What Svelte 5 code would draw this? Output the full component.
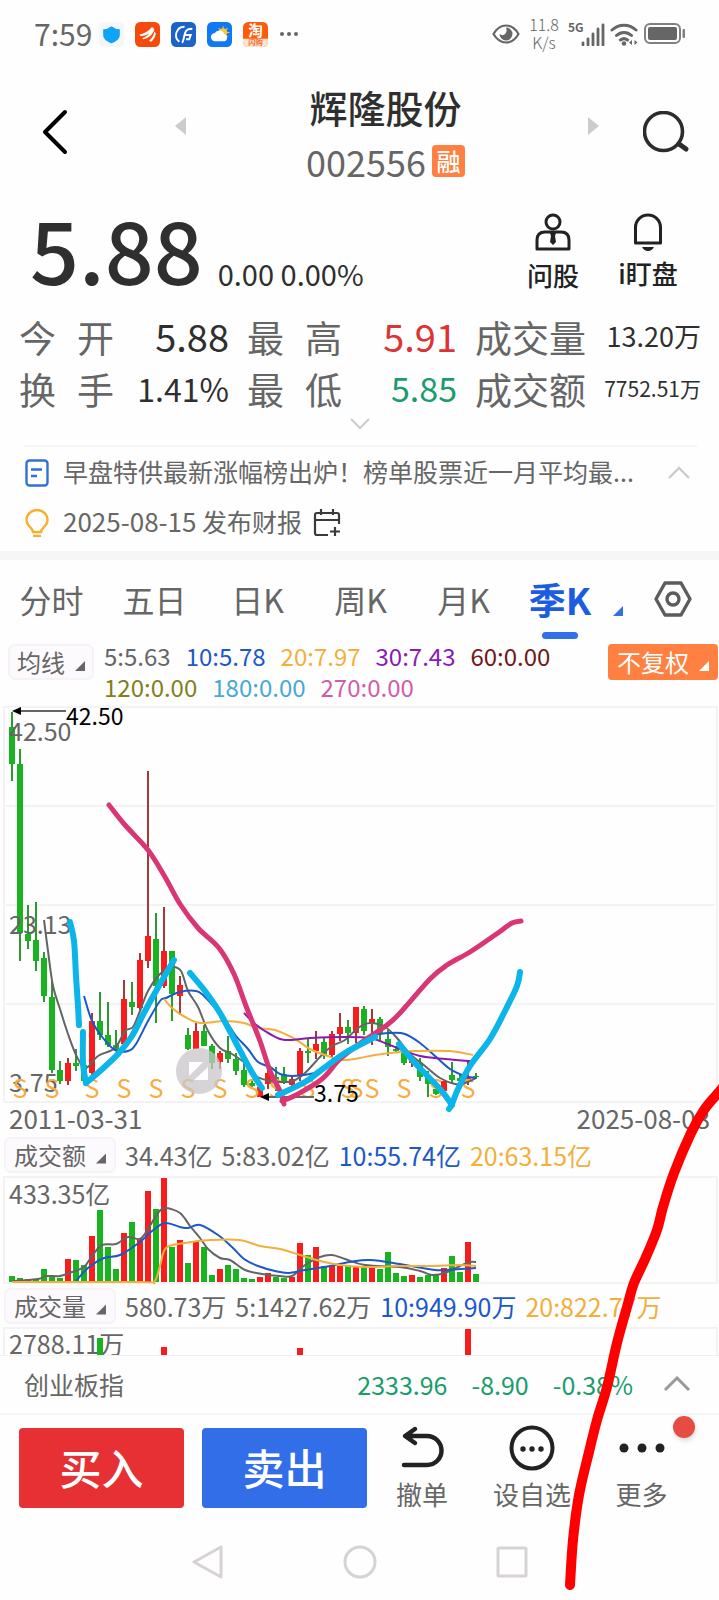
<script>
  const tabs = ['分时', '五日', '日K', '周K', '月K', '季K'];

  const averages = [
    [
      { text: '5:5.63', tone: 'gray' },
      { text: '10:5.78', tone: 'blue' },
      { text: '20:7.97', tone: 'gold' },
      { text: '30:7.43', tone: 'purple' },
      { text: '60:0.00', tone: 'maroon' }
    ],
    [
      { text: '120:0.00', tone: 'olive' },
      { text: '180:0.00', tone: 'sky' },
      { text: '270:0.00', tone: 'pink' }
    ]
  ];

  const amounts = [
    { text: '34.43亿', tone: 'gray' },
    { text: '5:83.02亿', tone: 'gray' },
    { text: '10:55.74亿', tone: 'blue' },
    { text: '20:63.15亿', tone: 'gold' }
  ];

  const volumes = [
    { text: '580.73万', tone: 'gray' },
    { text: '5:1427.62万', tone: 'gray' },
    { text: '10:949.90万', tone: 'blue' },
    { text: '20:822.77万', tone: 'gold' }
  ];

  // Quarterly candles: direction, wick top, wick bottom, body top, body bottom
  const candles = [
    ['g', 711, 780, 726, 763], ['g', 748, 960, 763, 932], ['g', 904, 948, 933, 940],
    ['g', 901, 970, 939, 960], ['g', 951, 1001, 957, 995], ['g', 980, 1072, 996, 1069],
    ['g', 1060, 1083, 1069, 1080], ['r', 1057, 1084, 1062, 1080], ['g', 1048, 1070, 1062, 1065],
    ['g', 1040, 1082, 1064, 1080], ['r', 1012, 1075, 1020, 1072], ['g', 991, 1039, 1020, 1034],
    ['g', 1001, 1046, 1034, 1044], ['g', 1029, 1050, 1044, 1049], ['r', 979, 1045, 998, 1043],
    ['g', 981, 1014, 1001, 1006], ['r', 952, 1010, 959, 1007], ['r', 770, 967, 935, 960],
    ['g', 912, 1022, 938, 985], ['r', 906, 987, 950, 985], ['g', 950, 1020, 950, 993],
    ['r', 975, 1014, 984, 995], ['g', 1027, 1049, 1034, 1048], ['r', 1021, 1048, 1030, 1048],
    ['g', 1024, 1045, 1030, 1045], ['g', 1043, 1068, 1045, 1062], ['r', 1050, 1068, 1052, 1061],
    ['g', 1035, 1062, 1050, 1058], ['g', 1052, 1074, 1058, 1070], ['g', 1060, 1086, 1069, 1084],
    ['g', 1079, 1086, 1082, 1085], ['r', 1084, 1096, 1086, 1096], ['r', 1067, 1088, 1072, 1083],
    ['g', 1066, 1090, 1076, 1080], ['g', 1066, 1083, 1073, 1080], ['r', 1074, 1086, 1078, 1084],
    ['r', 1047, 1080, 1050, 1074], ['g', 1038, 1062, 1050, 1052], ['r', 1030, 1058, 1043, 1050],
    ['g', 1036, 1058, 1041, 1054], ['r', 1030, 1056, 1033, 1054], ['r', 1012, 1040, 1026, 1033],
    ['g', 1019, 1043, 1026, 1032], ['r', 1006, 1042, 1006, 1032], ['g', 1005, 1034, 1008, 1030],
    ['r', 1008, 1044, 1018, 1022], ['g', 1016, 1040, 1018, 1033], ['g', 1029, 1055, 1038, 1046],
    ['g', 1045, 1052, 1048, 1050], ['g', 1046, 1064, 1049, 1062], ['r', 1054, 1066, 1058, 1062],
    ['g', 1057, 1080, 1062, 1076], ['g', 1070, 1096, 1076, 1083], ['g', 1080, 1094, 1088, 1093],
    ['r', 1080, 1090, 1080, 1090], ['g', 1061, 1083, 1074, 1079], ['g', 1074, 1082, 1077, 1080],
    ['r', 1060, 1084, 1076, 1081], ['g', 1072, 1078, 1075, 1076]
  ];

  // Bar tops of the turnover chart, one per candle
  const turnover = [
    1275, 1277, 1278, 1278, 1268, 1276, 1277, 1258, 1259, 1264, 1235, 1209, 1246, 1268, 1232,
    1221, 1238, 1190, 1208, 1177, 1246, 1239, 1262, 1240, 1246, 1274, 1268, 1264, 1268, 1277,
    1278, 1276, 1272, 1276, 1277, 1276, 1242, 1254, 1246, 1265, 1265, 1265, 1264, 1265, 1266,
    1266, 1268, 1251, 1272, 1275, 1274, 1276, 1274, 1274, 1267, 1255, 1271, 1241, 1273
  ];

  const dividends = [20, 52, 92, 124, 156, 188, 220, 252, 276, 308, 348, 356, 372, 404, 436, 468];

  const priceLines = [
    ['#646464', '44,919 48,950 53,985 60,1008 68,1033 77,1056 86,1067 98,1055 115,1047 125,1030 133,1026 140,1010 148,990 160,973 172,966 181,970 188,990 198,1006 208,1030 220,1047 232,1053 246,1063 254,1074 266,1079 280,1081 293,1080 305,1072 320,1056 332,1045 345,1039 358,1027 370,1022 385,1026 397,1037 410,1053 425,1065 440,1077 455,1083 465,1082 476,1077'],
    ['#1c58c8', '84,995 92,1020 103,1037 115,1049 128,1050 136,1043 148,1020 160,1000 166,997 180,991 196,990 204,995 215,1007 226,1020 236,1035 248,1048 258,1061 270,1066 280,1073 292,1075 310,1073 325,1068 340,1056 360,1042 375,1034 390,1032 405,1033 420,1042 435,1055 450,1068 465,1075 476,1077'],
    ['#f3ae3c', '164,998 172,1007 185,1016 200,1022 225,1020 244,1022 258,1027 275,1029 295,1038 310,1048 325,1054 342,1059 360,1057 375,1054 400,1051 415,1050 450,1050 473,1054'],
    ['#8a1ab0', '244,1012 255,1023 270,1033 285,1039 310,1037 345,1036 370,1037 385,1042 400,1048 420,1055 445,1058 470,1060']
  ];

  const turnoverLines = [
    ['#646464', '12,1280 38,1278 46,1275 60,1275 72,1271 84,1266 92,1255 102,1244 116,1243 128,1236 140,1238 148,1228 158,1212 165,1207 180,1212 190,1225 200,1237 208,1248 220,1257 230,1259 245,1269 262,1273 280,1275 292,1275 305,1264 320,1256 332,1254 345,1258 365,1264 400,1266 420,1270 432,1274 445,1272 460,1265 470,1261 476,1261'],
    ['#1c58c8', '76,1280 88,1267 104,1257 120,1254 140,1241 152,1230 165,1222 180,1226 188,1227 200,1224 218,1234 232,1246 244,1258 258,1265 275,1270 288,1272 305,1269 330,1265 350,1261 370,1259 400,1263 435,1269 460,1268 476,1267'],
    ['#f3ae3c', '12,1281 140,1281 154,1281 160,1265 166,1247 185,1242 210,1239 240,1239 260,1245 280,1248 300,1254 320,1260 340,1264 365,1266 400,1265 430,1265 460,1264 476,1265']
  ];

  const cyanStrokes = [
    '70,921 74,940 76,975 78,1005 79,1024',
    '83,1031 83,1062 86,1082',
    '86,1082 100,1070 118,1053 132,1035 145,1010 160,983 174,959',
    '190,972 205,990 220,1012 235,1040 250,1068 262,1087',
    '278,1094 305,1081 320,1070 345,1052 375,1036',
    '399,1043 415,1062 440,1088 452,1104',
    '449,1108 452,1103 458,1088 470,1065 490,1038 505,1010 517,985 520,971'
  ];

  const pinkStrokes = [
    '109,804 125,824 148,849 165,876 180,903 198,927 219,947 234,973 246,1005 260,1040 270,1070 280,1090 284,1103',
    '282,1100 296,1094 322,1078 340,1058 362,1041 387,1024 400,1012 430,978 447,964 470,951 495,934 512,922 521,920'
  ];

  const penStroke = '726,1084 719,1092 704,1110 691,1133 674,1173 663,1207 657,1230 646,1257 634,1283 627,1307 617,1343 607,1387 597,1420 589,1452 579,1495 573,1540 570,1585';

  const colors = { g: '#17b41f', r: '#f81c1c' };
  const wicks = { g: '#2c9a30', r: '#a33a38' };

  // Catmull-Rom spline through the points
  function smooth(points) {
    const p = points.split(' ').map((s) => s.split(',').map(Number));
    let d = `M${p[0][0]} ${p[0][1]}`;
    for (let i = 0; i < p.length - 1; i++) {
      const a = p[i - 1] ?? p[i];
      const b = p[i];
      const c = p[i + 1];
      const e = p[i + 2] ?? c;
      d += `C${b[0] + (c[0] - a[0]) / 6} ${b[1] + (c[1] - a[1]) / 6} ${c[0] - (e[0] - b[0]) / 6} ${c[1] - (e[1] - b[1]) / 6} ${c[0]} ${c[1]}`;
    }
    return d;
  }
</script>

<div class="page">
  <header class="status">
    <span class="clock">7:59</span>
    <svg class="app" viewBox="0 0 24 24"><rect width="24" height="24" rx="4" fill="#f5f6f7" /><path d="M12 4q-4 3-8 3v5.500c0 4 4 6.500 8 8 4-1.500 8-4 8-8V7q-4 0-8-3z" fill="#10a4f8" /></svg>
    <svg class="app" viewBox="0 0 24 24"><rect width="24" height="24" rx="5" fill="#f64a0c" /><path d="M4.500 12C9 11 13 9 16 5l2 .5c-1.500 4.500-7 8-13 8zM7 15.500c5-1.500 8-5 10-9.500l1.500 1c-1 5-5.500 8.500-10.500 9.500zM13.500 18c3-2.500 4.500-5.500 5-9l1.500 2c-.5 3-2 6-4.500 8z" fill="#fff" /></svg>
    <svg class="app" viewBox="0 0 24 24"><rect width="24" height="24" rx="5" fill="#1c63c8" /><path d="M13 4.500c-8 0-11 10-5 14.500M10.500 20c2-1.500 2-9 4-11.500q1.500-2 6-2M13 12.500h6l-1.500 4h-3" fill="none" stroke="#fff" stroke-width="1.800" /></svg>
    <svg class="app" viewBox="0 0 24 24"><rect width="24" height="24" rx="5" fill="#0f78f4" /><path d="M15.500 4v12M9.500 10h12M11.300 5.800l8.400 8.400M19.700 5.800l-8.400 8.400" stroke="#ffc928" stroke-width="1" /><circle cx="15.500" cy="10" r="4" fill="#ffc928" /><path d="M8 18.500a4 4 0 0 1-.5-8 5 5 0 0 1 9 1 3.600 3.600 0 0 1 0 7z" fill="#fff" /></svg>
    <svg class="app" viewBox="0 0 24 24"><rect width="24" height="24" rx="5" fill="#ff5a0c" /><path d="M0 16h24v3a5 5 0 0 1-5 5H5a5 5 0 0 1-5-5z" fill="#ffe2cc" /><text x="12" y="13.500" text-anchor="middle" font-size="14" font-weight="700" fill="#fff">淘</text><text x="12" y="22.500" text-anchor="middle" font-size="7" font-weight="700" fill="#f07030">闪购</text></svg>
    <svg class="more" viewBox="0 0 20 6"><circle cx="3" cy="3" r="2" /><circle cx="10" cy="3" r="2" /><circle cx="17" cy="3" r="2" /></svg>
    <span class="fill"></span>
    <svg class="eye" viewBox="0 0 28 20"><path d="M1.500 10C5 4 9 1.500 14 1.500S23 4 26.500 10C23 16 19 18.500 14 18.500S5 16 1.500 10z" fill="none" stroke="#666" stroke-width="2.200" /><path d="M14 3.500a6.500 6.500 0 1 1-6.500 6.500q3.500 2.500 6-.5 2-3 .5-6z" fill="#666" /></svg>
    <span class="speed">11.8<br />K/s</span>
    <span class="net">5G</span>
    <svg class="signal" viewBox="0 0 24 23"><path d="M2 20v2M7 16v6M12 11v11M17 6v16M22 2v20" stroke="#666" stroke-width="2.800" stroke-linecap="round" /></svg>
    <svg class="wifi" viewBox="0 0 28 23"><g fill="none" stroke="#666" stroke-width="3" stroke-linecap="round"><path d="M2 7C9 .5 19 .5 26 7M6.500 12.500c4.500-4 10.500-4 15 0M10.500 17c2.500-2 4.500-2 7 0" /></g><circle cx="14" cy="20.500" r="2.300" fill="#666" /><path d="M22 17v5l-3-2.500zM24.500 17v5l3-2.500z" fill="#666" /></svg>
    <svg class="battery" viewBox="0 0 42 22"><rect x="1" y="1" width="35" height="19" rx="5" fill="none" stroke="#808080" stroke-width="2" /><rect x="4" y="4" width="29" height="13" rx="2" fill="#666" /><path d="M39 6.500h1.500v8H39z" fill="#808080" stroke="#808080" stroke-linejoin="round" /></svg>
  </header>

  <nav class="title-bar">
    <button class="plain" aria-label="返回"><svg class="back" viewBox="0 0 26 46"><path d="M23 3 3 23l20 20" fill="none" stroke="#000" stroke-width="4" stroke-linecap="round" stroke-linejoin="round" /></svg></button>
    <button class="plain previous" aria-label="上一只"><svg class="step" viewBox="0 0 11 18"><path d="M11 0v18L0 9z" fill="#ccc" /></svg></button>
    <div class="title">
      <h1>辉隆股份</h1>
      <p>002556<span class="badge">融</span></p>
    </div>
    <button class="plain next" aria-label="下一只"><svg class="step" viewBox="0 0 11 18"><path d="M0 0v18l11-9z" fill="#ccc" /></svg></button>
    <button class="plain" aria-label="搜索"><svg class="search" viewBox="0 0 46 42"><circle cx="20.500" cy="20.500" r="19" fill="none" stroke="#2c2c2c" stroke-width="3.600" /><path d="m36 33 7 5" stroke="#2c2c2c" stroke-width="5" stroke-linecap="round" /></svg></button>
  </nav>

  <section class="quote">
    <strong>5.88</strong>
    <span class="change">0.00 0.00%</span>
    <span class="fill"></span>
    <button class="plain tool">
      <svg viewBox="0 0 36 38"><g fill="none" stroke="#222" stroke-width="3"><circle cx="18" cy="9" r="7" /><path d="M10 19h16q8 0 8 8v9H2v-9q0-8 8-8z" stroke-linejoin="round" /></g><path d="m18 18 3 2-1 3 1 6-3 3-3-3 1-6-1-3z" fill="#222" /></svg>
      问股
    </button>
    <button class="plain tool">
      <svg viewBox="0 0 36 38"><path d="M5.500 30V14.500a12.500 12.500 0 0 1 25 0V30z" fill="none" stroke="#222" stroke-width="3" stroke-linejoin="round" /><path d="M12 34h12q-2 4-6 4t-6-4z" fill="#222" /></svg>
      i盯盘
    </button>
  </section>

  <dl class="stats">
    <div><dt><span>今</span><span>开</span></dt><dd class="big">5.88</dd></div>
    <div><dt><span>最</span><span>高</span></dt><dd class="big up">5.91</dd></div>
    <div><dt class="wide">成交量</dt><dd class="mid">13.20万</dd></div>
    <div><dt><span>换</span><span>手</span></dt><dd class="rate">1.41%</dd></div>
    <div><dt><span>最</span><span>低</span></dt><dd class="low down">5.85</dd></div>
    <div><dt class="wide">成交额</dt><dd class="small">7752.51万</dd></div>
  </dl>
  <button class="plain expand" aria-label="展开"><svg viewBox="0 0 22 12"><path d="m2 1 9 9 9-9" fill="none" stroke="#ccc" stroke-width="2" /></svg></button>

  <section class="news">
    <a href="#news">
      <svg viewBox="0 0 24 28"><rect x="1.500" y="1.500" width="21" height="25" rx="3" fill="none" stroke="#3270d8" stroke-width="2.400" /><path d="M6 10.500h11M6 17h6" stroke="#3270d8" stroke-width="2.400" /></svg>
      <span class="headline">早盘特供最新涨幅榜出炉！榜单股票近一月平均最...</span>
      <svg class="fold" viewBox="0 0 24 14"><path d="m2 12 10-10 10 10" fill="none" stroke="#ccc" stroke-width="2.400" /></svg>
    </a>
    <a href="#report">
      <svg viewBox="0 0 24 28"><path d="M8 23c0-4-6.500-6-6.500-12a10.500 10 0 0 1 21 0c0 6-6.500 8-6.500 12zM8 27h8" fill="none" stroke="#f5b02c" stroke-width="2.400" /></svg>
      <span><span class="date">2025-08-15</span> 发布财报</span>
      <svg class="calendar" viewBox="0 0 28 28"><path d="M15 26H4q-2 0-2-2V6q0-2 2-2h20q2 0 2 2v9M2 11h24M8 0v6M20 0v6M22 18v9M17 22.500h10" fill="none" stroke="#3a3a3a" stroke-width="2.200" /></svg>
    </a>
  </section>

  <nav class="tabs">
    {#each tabs as tab, i}
      <button class="plain" class:active={i === 5}>{tab}</button>
    {/each}
    <svg class="caret-blue" viewBox="0 0 10 10"><path d="M10 0v10H0z" fill="#3270e8" /></svg>
    <button class="plain" aria-label="设置"><svg class="gear" viewBox="0 0 38 36"><path d="M11 2h16l9 16-9 16H11L2 18z" fill="none" stroke="#5c5c5c" stroke-width="3.400" stroke-linejoin="round" /><circle cx="19" cy="18" r="6" fill="none" stroke="#5c5c5c" stroke-width="3.400" /></svg></button>
  </nav>

  <section class="legend">
    <button class="chip">均线<i></i></button>
    <div class="averages">
      {#each averages as row}
        <div>{#each row as item}<span class={item.tone}>{item.text}</span>{/each}</div>
      {/each}
    </div>
    <button class="chip orange">不复权<i></i></button>
  </section>

  <svg class="chart" viewBox="0 705 719 405" role="img" aria-label="季K线图">
    <g fill="none" stroke="#f4f3f4" stroke-width="2">
      <rect x="4" y="706" width="713" height="395" />
      <path d="M6 805h709M6 904h709M6 1003h709" />
    </g>
    {#each candles as [dir, top, low, open, close], i}
      <rect x={11 + 8 * i} y={top} width="2" height={low - top} fill={wicks[dir]} />
      <rect x={9 + 8 * i} y={open} width="6" height={close - open} fill={colors[dir]} />
    {/each}
    <g font-size="25" fill="#666">
      <text x="9" y="740">42.50</text>
      <text x="9" y="933">23.13</text>
      <text x="9" y="1091">3.75</text>
    </g>
    <g font-size="25" fill="#f3ae3c" text-anchor="middle">
      {#each dividends as x}<text {x} y="1097">S</text>{/each}
    </g>
    {#each priceLines as [color, points]}
      <path d={smooth(points)} fill="none" stroke={color} stroke-width="2" />
    {/each}
    <path d="M18 710h48M264 1096h50" stroke="#666" stroke-width="2" />
    <path d="m12 710 9-4v8zM260 1096l9-4v8z" />
    <g font-size="23">
      <text x="66" y="724">42.50</text>
      <text x="314" y="1101">3.75</text>
    </g>
    <circle cx="199" cy="1070" r="23" fill="#c9c5ca" opacity="0.75" />
    <path d="M189 1061h14l-14 14zM208 1066v13h-14z" fill="#fff" />
    <g fill="none" stroke-linecap="round" stroke-linejoin="round">
      {#each pinkStrokes as points}<path d={smooth(points)} stroke="#d83675" stroke-width="5" />{/each}
      {#each cyanStrokes as points}<path d={smooth(points)} stroke="#0bb5ea" stroke-width="6" />{/each}
    </g>
  </svg>
  <div class="range"><span>2011-03-31</span><span>2025-08-08</span></div>

  <section class="legend values">
    <button class="chip">成交额<i></i></button>
    {#each amounts as item}<span class={item.tone}>{item.text}</span>{/each}
  </section>
  <svg class="chart" viewBox="0 1175 719 108" role="img" aria-label="成交额">
    <rect x="4" y="1176" width="713" height="106" fill="none" stroke="#f4f3f4" stroke-width="2" />
    {#each turnover as top, i}
      <rect x={9 + 8 * i} y={top} width="6" height={1281 - top} fill={colors[candles[i][0]]} />
    {/each}
    <text x="9" y="1203" font-size="25" fill="#666">433.35亿</text>
    {#each turnoverLines as [color, points]}
      <path d={smooth(points)} fill="none" stroke={color} stroke-width="2" />
    {/each}
  </svg>

  <section class="legend values">
    <button class="chip">成交量<i></i></button>
    {#each volumes as item}<span class={item.tone}>{item.text}</span>{/each}
  </section>
  <svg class="chart clipped" viewBox="0 1326 719 28" role="img" aria-label="成交量">
    <path d="M4 1354v-27h713v27" fill="none" stroke="#f4f3f4" stroke-width="2" />
    <text x="9" y="1353" font-size="25" fill="#666">2788.11万</text>
    <rect x="97" y="1337" width="6" height="17" fill="#17b41f" />
    <path d="M161 1346h6v8h-6zM297 1347h6v7h-6zM465 1328h6v26h-6z" fill="#f81c1c" />
  </svg>

  <section class="index">
    <span>创业板指</span>
    <span class="fill"></span>
    <b>2333.96</b><b>-8.90</b><b>-0.38%</b>
    <svg viewBox="0 0 28 16"><path d="m2 14 12-12 12 12" fill="none" stroke="#999" stroke-width="3" /></svg>
  </section>

  <footer class="actions">
    <button class="trade buy">买入</button>
    <button class="trade sell">卖出</button>
    <button class="plain action">
      <svg viewBox="0 0 48 48"><path d="M6 41h23a14 14 0 0 0 0-29H8M17 5 7 12l10 7" fill="none" stroke="#222" stroke-width="4.500" stroke-linecap="round" stroke-linejoin="round" /></svg>
      撤单
    </button>
    <button class="plain action wider">
      <svg viewBox="0 0 48 48"><circle cx="24" cy="24" r="20.500" fill="none" stroke="#222" stroke-width="4" /><g fill="#222"><circle cx="15" cy="25" r="2.700" /><circle cx="24" cy="25" r="2.700" /><circle cx="33" cy="25" r="2.700" /></g></svg>
      设自选
    </button>
    <button class="plain action last">
      <svg viewBox="0 0 48 48"><g fill="#222"><circle cx="6" cy="24" r="4.500" /><circle cx="24" cy="24" r="4.500" /><circle cx="42" cy="24" r="4.500" /></g></svg>
      更多
      <span class="dot"></span>
    </button>
  </footer>

  <nav class="system">
    <button class="plain" aria-label="后退"><svg viewBox="0 0 34 34"><path d="M30 2v30L3 17z" /></svg></button>
    <button class="plain" aria-label="主页"><svg viewBox="0 0 34 34"><circle cx="17" cy="17" r="15" /></svg></button>
    <button class="plain" aria-label="最近任务"><svg viewBox="0 0 34 34"><rect x="3" y="3" width="28" height="28" rx="1" /></svg></button>
  </nav>

  <svg class="pen" viewBox="0 0 719 1600" preserveAspectRatio="xMinYMin meet" aria-hidden="true">
    <path d={smooth(penStroke)} fill="none" stroke="#fe0000" stroke-width="10" stroke-linecap="round" />
  </svg>
</div>

<style>
  :global(body) {
    background: #fefefe;
  }
  .page {
    position: relative;
    overflow: hidden;
    font-family: 'Noto Sans CJK SC', 'Noto Sans', sans-serif;
    color: #666;
    background: #fefefe;
  }
  svg {
    display: block;
    flex: none;
  }
  h1, p, dl, dt, dd {
    margin: 0;
    font-weight: 400;
  }
  button {
    font: inherit;
    color: inherit;
    border: 0;
    padding: 0;
    white-space: nowrap;
  }
  .plain {
    background: none;
  }
  .fill {
    flex: 1;
  }

  .status {
    display: flex;
    align-items: center;
    height: 68px;
    padding: 0 33px 0 34px;
  }
  .clock {
    width: 65px;
    font-size: 30px;
    line-height: 36px;
    padding-bottom: 2px;
  }
  .app {
    width: 25px;
    height: 25px;
    margin-right: 11px;
    overflow: visible;
  }
  .more {
    width: 20px;
    fill: #666;
  }
  .eye {
    width: 28px;
  }
  .speed {
    width: 48px;
    text-align: center;
    font-size: 16px;
    line-height: 18px;
    font-weight: 300;
    padding-bottom: 2px;
  }
  .net {
    align-self: flex-start;
    margin-top: 19px;
    font-size: 12px;
    line-height: 16px;
    font-weight: 700;
    width: 13px;
  }
  .signal {
    width: 24px;
    margin-right: 5px;
  }
  .wifi {
    width: 28px;
    margin-right: 6px;
  }
  .battery {
    width: 42px;
  }

  .title-bar {
    display: flex;
    align-items: flex-start;
    padding: 12px 30px 0 42px;
    height: 124px;
    box-sizing: border-box;
  }
  .back {
    width: 26px;
    margin-top: 29px;
  }
  .previous {
    margin-left: 107px;
  }
  .next {
    margin-right: 44px;
  }
  .step {
    width: 11px;
    margin-top: 37px;
  }
  .search {
    width: 46px;
    margin-top: 31px;
  }
  .title {
    flex: 1;
    text-align: center;
    padding-right: 3px;
  }
  h1 {
    font-size: 38px;
    line-height: 54px;
    font-weight: 500;
    color: #2f2f2f;
  }
  .title p {
    display: flex;
    align-items: center;
    justify-content: center;
    gap: 6px;
    font-size: 36px;
    line-height: 54px;
  }
  .badge {
    width: 33px;
    border-radius: 4px;
    background: #ff8040;
    color: #fff;
    font-size: 24px;
    line-height: 32px;
    font-weight: 500;
  }

  .quote {
    display: flex;
    align-items: flex-end;
    height: 119px;
    padding: 0 39px 0 29px;
    color: #2f2f2f;
  }
  .quote strong {
    font-size: 86px;
    line-height: 116px;
    font-weight: 500;
    margin: 0 15px 5px 1px;
  }
  .change {
    font-size: 29px;
    line-height: 40px;
    margin-bottom: 18px;
  }
  .tool {
    display: flex;
    flex-direction: column;
    align-items: center;
    gap: 6px;
    width: 98px;
    padding-bottom: 18px;
    font-size: 26px;
    line-height: 36px;
    font-weight: 500;
    color: #222;
  }
  .tool + .tool {
    gap: 4px;
    padding-bottom: 20px;
    width: 92px;
    margin-right: -14px;
  }
  .tool svg {
    width: 36px;
  }

  .stats {
    display: grid;
    grid-template-columns: 210fr 210fr 226fr;
    grid-auto-rows: 52px;
    column-gap: 18px;
    padding: 0 18px 0 19px;
  }
  .stats div {
    display: flex;
    align-items: center;
    justify-content: space-between;
  }
  dt {
    display: flex;
    justify-content: space-between;
    width: 95px;
    font-size: 37px;
    line-height: 52px;
  }
  dt.wide {
    width: auto;
  }
  dd {
    color: #2f2f2f;
    line-height: 50px;
    padding-bottom: 2px;
    white-space: nowrap;
  }
  .big { font-size: 38px; }
  .mid { font-size: 27px; }
  .rate { font-size: 32px; }
  .low { font-size: 34px; }
  .small { font-size: 21px; }
  .up { color: #dc3337; }
  .down { color: #1b9c6c; }
  .expand {
    display: block;
    margin: 3px auto 15px;
  }
  .expand svg {
    width: 22px;
  }

  .news {
    margin: 0 22px 0 24px;
    border-top: 2px solid #f4f4f4;
    padding-bottom: 5px;
    font-size: 25px;
    line-height: 49px;
  }
  .news a {
    display: flex;
    align-items: center;
    gap: 14px;
    padding: 0 6px 0 1px;
    color: inherit;
    text-decoration: none;
  }
  .news a svg {
    width: 24px;
    margin-top: 3px;
  }
  .headline {
    flex: 1;
    min-width: 0;
    white-space: nowrap;
  }
  .date {
    font-size: 26px;
  }
  .news .calendar {
    width: 28px;
    margin-left: -3px;
  }

  .tabs {
    display: grid;
    grid-template-columns: 103fr 103fr 103fr 103fr 103fr 90fr 38fr 60fr 16fr;
    align-items: center;
    justify-items: center;
    border-top: 9px solid #f6f6f6;
    font-size: 32px;
    line-height: 78px;
  }
  .active {
    position: relative;
    font-size: 37px;
    font-weight: 700;
    color: #1c5ce0;
  }
  .active::after {
    content: '';
    position: absolute;
    left: 50%;
    bottom: -1px;
    width: 36px;
    height: 7px;
    margin-left: -18px;
    border-radius: 4px;
    background: #3270e8;
  }
  .caret-blue {
    width: 10px;
    margin-top: 24px;
    justify-self: start;
    margin-left: 8px;
  }
  .gear {
    width: 38px;
  }

  .legend {
    display: flex;
    align-items: flex-start;
    padding: 3px 1px 0 8px;
    font-size: 24px;
    line-height: 30px;
  }
  .averages {
    flex: 1;
    padding: 0 0 3px 10px;
  }
  .averages div {
    display: flex;
    gap: 15px;
    margin-bottom: 1px;
  }
  .chip {
    display: flex;
    align-items: center;
    gap: 10px;
    box-sizing: border-box;
    height: 36px;
    padding: 0 7px;
    border: 2px solid #f6f2f7;
    border-radius: 7px;
    background: #fdfafd;
    font-size: 24px;
    line-height: 32px;
    margin-top: 3px;
  }
  .chip i {
    width: 10px;
    height: 10px;
    margin-top: 8px;
    background: currentColor;
    clip-path: polygon(100% 0, 100% 100%, 0 100%);
  }
  .orange {
    border-color: #ff8040;
    border-radius: 4px;
    background: #ff8040;
    color: #fff;
  }
  .chart {
    width: 100%;
    height: auto;
    overflow: visible;
  }
  .clipped {
    overflow: hidden;
  }
  .range {
    display: flex;
    justify-content: space-between;
    padding: 0 9px;
    margin-top: -9px;
    font-size: 26px;
    line-height: 31px;
  }
  .values {
    align-items: center;
    gap: 9px;
    height: 43px;
    box-sizing: border-box;
    padding: 0 0 0 4px;
    font-size: 25px;
    line-height: 36px;
    white-space: nowrap;
  }
  .values .chip {
    padding: 0 8px;
    margin: 0;
  }
  .gray { color: #666; }
  .blue { color: #1c58c8; }
  .gold { color: #f3ae3c; }
  .purple { color: #8a1ab0; }
  .maroon { color: #701818; }
  .olive { color: #808020; }
  .sky { color: #48a8d4; }
  .pink { color: #d05cac; }

  .index {
    display: flex;
    align-items: center;
    gap: 24px;
    height: 60px;
    box-sizing: border-box;
    padding: 0 28px 2px 24px;
    border-top: 1px solid #f0f0f0;
    border-bottom: 2px solid #f4f4f4;
    font-size: 25px;
    line-height: 36px;
  }
  .index b {
    font-weight: 400;
    color: #1b9c6c;
  }
  .index svg {
    width: 28px;
    margin-left: 6px;
  }

  .actions {
    display: flex;
    align-items: flex-start;
    padding: 9px 19px 0;
  }
  .trade {
    flex: 1;
    height: 80px;
    margin: 4px 18px 0 0;
    padding-bottom: 2px;
    border-radius: 4px;
    color: #fff;
    font-size: 42px;
    line-height: 60px;
    font-weight: 500;
  }
  .buy { background: #e63034; }
  .sell { background: #326ee8; }
  .action {
    position: relative;
    display: flex;
    flex-direction: column;
    align-items: center;
    width: 74px;
    font-size: 26px;
    line-height: 38px;
    gap: 3px;
  }
  .action svg {
    width: 48px;
  }
  .wider {
    width: 146px;
  }
  .last {
    width: 73px;
    margin-right: 22px;
  }
  .dot {
    position: absolute;
    right: -17px;
    top: -8px;
    width: 22px;
    height: 22px;
    border-radius: 50%;
    background: #e64c42;
    box-shadow: 1px 3px 4px #0002;
  }
  .system {
    display: flex;
    justify-content: center;
    gap: 118px;
    padding: 32px 0 20px;
  }
  .system svg {
    width: 34px;
    fill: none;
    stroke: #d6d2d6;
    stroke-width: 3;
    stroke-linejoin: round;
  }
  .pen {
    position: absolute;
    inset: 0;
    width: 100%;
    pointer-events: none;
  }
</style>
